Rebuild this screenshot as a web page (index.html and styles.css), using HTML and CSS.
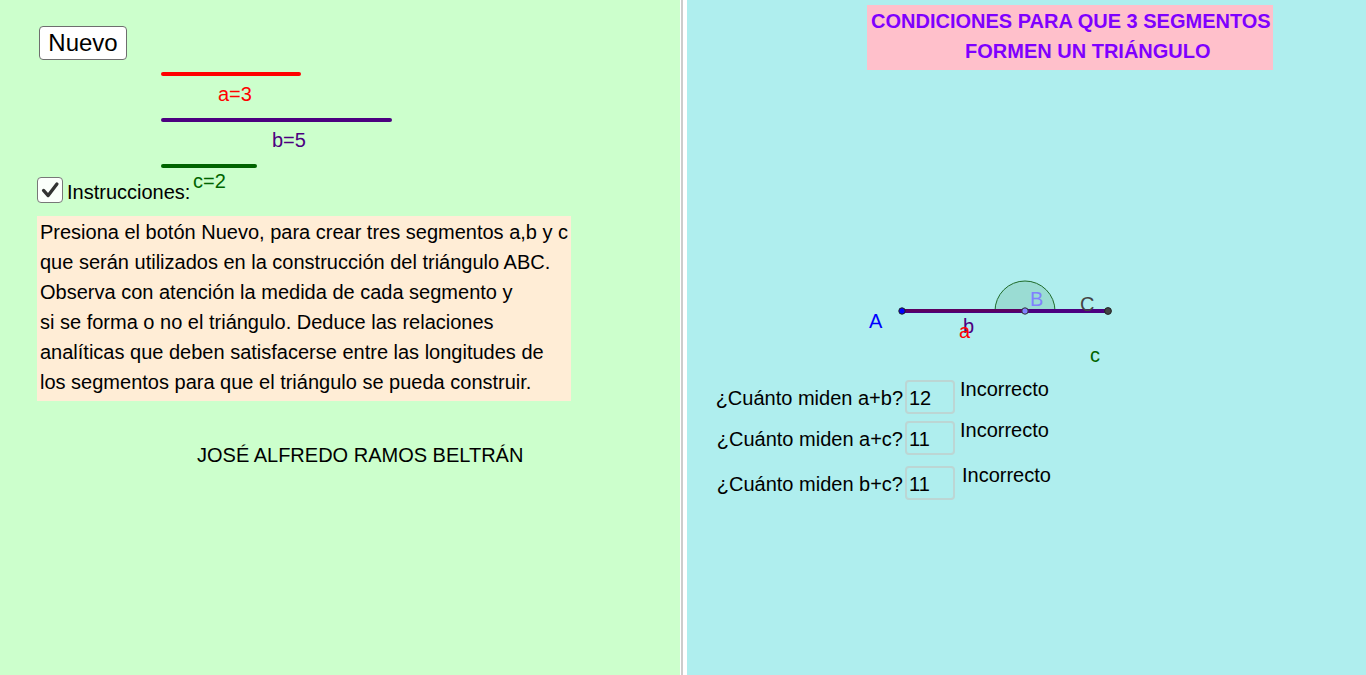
FILE: index.html
```html
<!DOCTYPE html>
<html lang="es">
<head>
<meta charset="utf-8">
<title>Condiciones para que 3 segmentos formen un triángulo</title>
<link rel="stylesheet" href="styles.css">
</head>
<body>
<div class="page">
  <section class="panel panel-left">
    <svg class="canvas" viewBox="0 0 680 675" width="680" height="675" aria-hidden="true">
      <line x1="163" y1="74" x2="299" y2="74" stroke="#ff0000" stroke-width="4" stroke-linecap="round"/>
      <text x="218" y="101" class="lbl" fill="#ff0000">a=3</text>
      <line x1="163" y1="120" x2="390" y2="120" stroke="#4c0080" stroke-width="4" stroke-linecap="round"/>
      <text x="272" y="147" class="lbl" fill="#4c0080">b=5</text>
      <line x1="163" y1="166" x2="255" y2="166" stroke="#006400" stroke-width="4" stroke-linecap="round"/>
      <text x="193" y="188" class="lbl" fill="#006400">c=2</text>
    </svg>
    <button class="btn-nuevo" type="button">Nuevo</button>
    <div class="check-row">
      <span class="checkbox">
        <svg viewBox="0 0 26 26" width="26" height="26"><path d="M6 13.5 L11 19 L20.5 6.5" fill="none" stroke="#333" stroke-width="3.6" stroke-linecap="round" stroke-linejoin="round"/></svg>
      </span>
      <span class="check-label">Instrucciones:</span>
    </div>
    <div class="instructions">
      Presiona el botón Nuevo, para crear tres segmentos a,b y c<br>
      que serán utilizados en la construcción del triángulo ABC.<br>
      Observa con atención la medida de cada segmento y<br>
      si se forma o no el triángulo. Deduce las relaciones<br>
      analíticas que deben satisfacerse entre las longitudes de<br>
      los segmentos para que el triángulo se pueda construir.
    </div>
    <div class="author">JOSÉ ALFREDO RAMOS BELTRÁN</div>
  </section>
  <div class="gutter"><div class="gutter-line"></div></div>
  <section class="panel panel-right">
    <svg class="canvas" viewBox="687 0 679 675" width="679" height="675" aria-hidden="true">
      <path d="M995 311 A30 30 0 0 1 1055 311 Z" fill="#9adcd3" stroke="#1f6b2a" stroke-width="1"/>
      <line x1="902" y1="311" x2="1108" y2="311" stroke="#4c0080" stroke-width="4"/>
      <line x1="902" y1="310.5" x2="1025" y2="310.5" stroke="#5c0060" stroke-width="3"/>
      <circle cx="902" cy="311" r="3.2" fill="#0000ff" stroke="#222" stroke-width="1"/>
      <circle cx="1025" cy="311" r="3.2" fill="#8080ff" stroke="#333" stroke-width="1"/>
      <circle cx="1108" cy="311" r="3.4" fill="#444" stroke="#222" stroke-width="1"/>
      <text x="869" y="328" class="lbl" fill="#0000ff">A</text>
      <text x="1030" y="306" class="lbl" fill="#8080ff">B</text>
      <text x="1080" y="311" class="lbl" fill="#444444">C</text>
      <text x="963" y="333" class="lbl" fill="#4c0080">b</text>
      <text x="959" y="338" class="lbl" fill="#ff0000">a</text>
      <text x="1090" y="362" class="lbl" fill="#006400">c</text>
    </svg>
    <h1 class="title">
      <span class="title-l1">CONDICIONES PARA QUE 3 SEGMENTOS</span>
      <span class="title-l2">FORMEN UN TRIÁNGULO</span>
    </h1>
    <div class="questions">
      <div class="q-row q1">
        <span class="q-label">¿Cuánto miden a+b?</span>
        <span class="q-input">12</span>
        <span class="q-result">Incorrecto</span>
      </div>
      <div class="q-row q2">
        <span class="q-label">¿Cuánto miden a+c?</span>
        <span class="q-input">11</span>
        <span class="q-result">Incorrecto</span>
      </div>
      <div class="q-row q3">
        <span class="q-label">¿Cuánto miden b+c?</span>
        <span class="q-input">11</span>
        <span class="q-result r3">Incorrecto</span>
      </div>
    </div>
  </section>
</div>
</body>
</html>
```

FILE: styles.css
```css
* { box-sizing: border-box; }
html, body {
  margin: 0;
  padding: 0;
  background: #ffffff;
  font-family: "Liberation Sans", Arial, sans-serif;
  color: #000;
  overflow: hidden;
}
.page {
  display: flex;
  width: 1366px;
  height: 675px;
}
.panel {
  position: relative;
  height: 675px;
  display: flex;
  flex-direction: column;
  align-items: flex-start;
}
.panel-left {
  width: 680px;
  background: #ccffcc;
  padding-left: 37px;
}
.gutter {
  width: 7px;
  padding-left: 1px;
  background: #ffffff;
}
.gutter-line {
  width: 2px;
  height: 100%;
  background: #cccccc;
}
.panel-right {
  flex: 1;
  background: #afeeee;
}
.canvas {
  position: absolute;
  left: 0;
  top: 0;
  pointer-events: none;
}
.lbl {
  font-family: "Liberation Sans", Arial, sans-serif;
  font-size: 20px;
}
.btn-nuevo {
  margin: 26px 0 0 2px;
  width: 88px;
  height: 34px;
  padding: 0 0 1px;
  background: #ffffff;
  border: 1px solid #6e6e6e;
  border-radius: 4px;
  font-family: "Liberation Sans", Arial, sans-serif;
  font-size: 24px;
  line-height: 30px;
  color: #000;
}
.check-row {
  display: flex;
  align-items: center;
  margin-top: 117px;
  height: 26px;
}
.checkbox {
  width: 26px;
  height: 26px;
  border: 1.5px solid #777;
  border-radius: 4px;
  background: #fbfffb;
  display: flex;
  align-items: center;
  justify-content: center;
}
.checkbox svg { display: block; }
.check-label {
  margin-left: 4px;
  font-size: 20px;
  line-height: 26px;
  position: relative;
  top: 2px;
}
.instructions {
  margin-top: 13px;
  width: 534px;
  height: 185px;
  padding: 1px 0 0 3px;
  background: #ffedd6;
  font-size: 20px;
  line-height: 30px;
  white-space: nowrap;
}
.author {
  margin: 43px 0 0 160px;
  font-size: 20px;
  line-height: 22px;
}
.title {
  margin: 5px 0 0 180px;
  width: 406px;
  height: 65px;
  padding-top: 1px;
  background: #ffc0cb;
  color: #7f00ff;
  font-size: 20px;
  font-weight: bold;
  line-height: 30px;
}
.title-l1, .title-l2 {
  display: block;
  white-space: nowrap;
}
.title-l1 { padding-left: 4px; }
.title-l2 { padding-left: 98px; }
.questions {
  margin: 310px 0 0 13px;
  display: flex;
  flex-direction: column;
}
.q-row {
  display: flex;
  align-items: center;
  height: 34px;
}
.q2 { margin-top: 7px; }
.q3 { margin-top: 11px; }
.q-label {
  width: 203px;
  text-align: right;
  font-size: 20px;
  line-height: 22px;
  padding-top: 2px;
  white-space: nowrap;
}
.q-input {
  margin-left: 2px;
  width: 50px;
  height: 34px;
  border: 2px solid #bcd6d4;
  border-radius: 4px;
  padding: 5px 0 0 2px;
  font-size: 20px;
  line-height: 22px;
}
.q-result {
  align-self: flex-start;
  margin: -2px 0 0 5px;
  font-size: 20px;
  line-height: 22px;
}
.r3 { margin-left: 7px; }
```
